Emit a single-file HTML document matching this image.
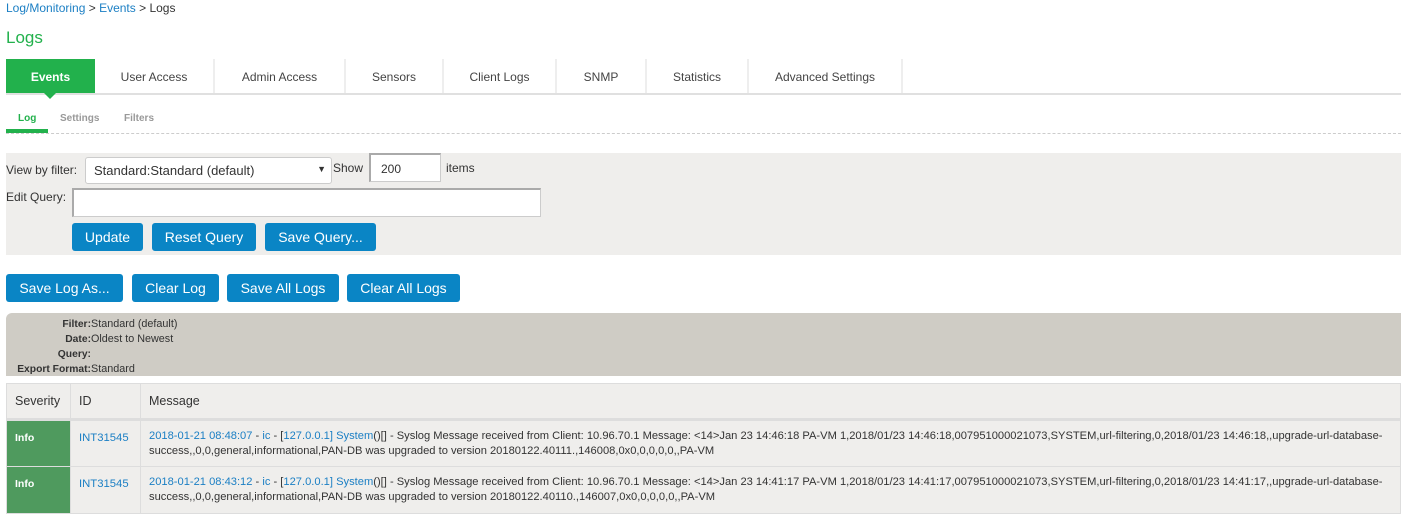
<!DOCTYPE html>
<html><head><meta charset="utf-8"><style>
*{box-sizing:border-box;margin:0;padding:0}
body{width:1401px;height:509px;overflow:hidden;background:#fff;font-family:"Liberation Sans",Arial,sans-serif;color:#333;position:relative}
.a{position:absolute}
.lnk{color:#1b7fc4;text-decoration:none}
.crumb{left:6px;top:1px;font-size:12px;color:#333}
.title{left:6px;top:28px;font-size:17px;color:#22b14c}
.tabs{left:6px;top:59px;height:36px;width:1395px;border-bottom:2px solid #e0e0e0}
.tab{position:absolute;top:0;height:34px;line-height:36px;font-size:12px;color:#444;text-align:center;border-right:2px solid #eee}
.tab.on{background:#22b14c;color:#fff;font-weight:bold;border:none}
.arrow{left:44px;top:93px;width:0;height:0;border-left:6px solid transparent;border-right:6px solid transparent;border-top:6px solid #22b14c}
.sub{top:113px;font-size:10px;font-weight:bold;color:#999}
.uline{left:6px;top:129px;width:42px;height:4px;background:#22b14c}
.dash{left:6px;top:133px;width:1395px;border-top:1px dashed #ccc}
.panel{left:6px;top:153px;width:1395px;height:102px;background:#efeeec}
.lbl{font-size:12px;color:#333}
.inp{background:#fff;border:1px solid #ccc}
.btn{position:absolute;background:#0a85c5;color:#fff;font-size:14px;text-align:center;border-radius:3px;height:28px;line-height:28px}
.info{left:6px;top:313px;width:1395px;height:63px;background:#cfccc5;border-top-left-radius:6px;font-size:10.8px}
.info div{position:absolute;white-space:nowrap}
.info b{font-weight:bold;font-size:10.3px}
table{position:absolute;left:6px;top:383px;width:1395px;border-collapse:collapse;font-size:12px}
td{border:1px solid #ddd;background:#efeeec;vertical-align:top}
.hd td{height:36px;vertical-align:middle;font-size:12.5px;color:#333;padding-left:8px;border:1px solid #ddd;border-bottom:3px solid #ddd}
.sev{background:#4f9a5e;color:#fff;font-weight:bold;font-size:10.5px;padding:11px 0 0 8px}
.msg{font-size:11.15px;line-height:15px;padding:8px 0 0 8px;white-space:nowrap;color:#333}
.id{font-size:11.3px;padding:11px 0 0 8px}
</style></head><body>
<div class="a crumb"><span class="lnk">Log/Monitoring</span> &gt; <span class="lnk">Events</span> &gt; Logs</div>
<div class="a title">Logs</div>
<div class="a tabs">
<div class="tab on" style="left:0;width:89px">Events</div>
<div class="tab" style="left:89px;width:120px">User Access</div>
<div class="tab" style="left:209px;width:131px">Admin Access</div>
<div class="tab" style="left:340px;width:98px">Sensors</div>
<div class="tab" style="left:438px;width:113px">Client Logs</div>
<div class="tab" style="left:551px;width:90px">SNMP</div>
<div class="tab" style="left:641px;width:102px">Statistics</div>
<div class="tab" style="left:743px;width:154px">Advanced Settings</div>
</div>
<div class="a arrow"></div>
<div class="a sub" style="left:18px;color:#22b14c">Log</div>
<div class="a sub" style="left:60px">Settings</div>
<div class="a sub" style="left:124px">Filters</div>
<div class="a uline"></div>
<div class="a dash"></div>
<div class="a panel"></div>
<div class="a lbl" style="left:6px;top:163px">View by filter:</div>
<div class="a inp" style="left:85px;top:157px;width:247px;height:27px;border-radius:3px;font-size:13px;padding:5px 0 0 8px">Standard:Standard (default)<span style="position:absolute;right:5px;top:6px;font-size:9px">▼</span></div>
<div class="a lbl" style="left:333px;top:161px">Show</div>
<div class="a inp" style="left:369px;top:153px;width:72px;height:29px;font-size:12px;padding:7px 0 0 10px;border-left:2px solid #aaa;border-top:2px solid #aaa">200</div>
<div class="a lbl" style="left:446px;top:161px">items</div>
<div class="a lbl" style="left:6px;top:190px">Edit Query:</div>
<div class="a inp" style="left:72px;top:188px;width:469px;height:29px;border-left:2px solid #aaa;border-top:2px solid #aaa"></div>
<div class="btn" style="left:72px;top:223px;width:71px">Update</div>
<div class="btn" style="left:152px;top:223px;width:104px">Reset Query</div>
<div class="btn" style="left:265px;top:223px;width:111px">Save Query...</div>
<div class="btn" style="left:6px;top:274px;width:117px">Save Log As...</div>
<div class="btn" style="left:132px;top:274px;width:87px">Clear Log</div>
<div class="btn" style="left:227px;top:274px;width:112px">Save All Logs</div>
<div class="btn" style="left:347px;top:274px;width:113px">Clear All Logs</div>
<div class="a info">
<div style="right:1310px;top:5px"><b>Filter:</b></div><div style="left:85px;top:5px">Standard (default)</div>
<div style="right:1310px;top:20px"><b>Date:</b></div><div style="left:85px;top:20px">Oldest to Newest</div>
<div style="right:1310px;top:35px"><b>Query:</b></div>
<div style="right:1310px;top:50px"><b>Export Format:</b></div><div style="left:85px;top:50px">Standard</div>
</div>
<table>
<tr class="hd"><td style="width:64px">Severity</td><td style="width:70px">ID</td><td>Message</td></tr>
<tr style="height:47px"><td class="sev">Info</td><td class="id lnk">INT31545</td><td class="msg"><span class="lnk">2018-01-21 08:48:07</span> - <span class="lnk">ic</span> - [<span class="lnk">127.0.0.1]</span> <span class="lnk">System</span>()[] - Syslog Message received from Client: 10.96.70.1 Message: &lt;14&gt;Jan 23 14:46:18 PA-VM 1,2018/01/23 14:46:18,007951000021073,SYSTEM,url-filtering,0,2018/01/23 14:46:18,,upgrade-url-database-<br>success,,0,0,general,informational,PAN-DB was upgraded to version 20180122.40111.,146008,0x0,0,0,0,0,,PA-VM</td></tr>
<tr style="height:47px"><td class="sev">Info</td><td class="id lnk">INT31545</td><td class="msg"><span class="lnk">2018-01-21 08:43:12</span> - <span class="lnk">ic</span> - [<span class="lnk">127.0.0.1]</span> <span class="lnk">System</span>()[] - Syslog Message received from Client: 10.96.70.1 Message: &lt;14&gt;Jan 23 14:41:17 PA-VM 1,2018/01/23 14:41:17,007951000021073,SYSTEM,url-filtering,0,2018/01/23 14:41:17,,upgrade-url-database-<br>success,,0,0,general,informational,PAN-DB was upgraded to version 20180122.40110.,146007,0x0,0,0,0,0,,PA-VM</td></tr>
</table>
</body></html>
